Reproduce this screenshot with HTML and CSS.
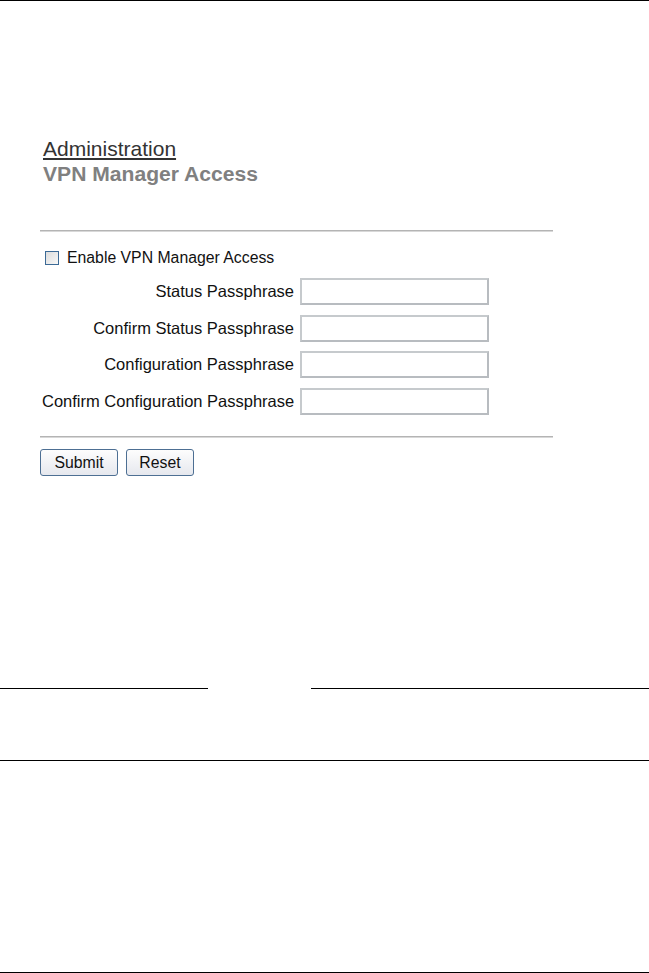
FILE: index.html
```html
<!DOCTYPE html>
<html>
<head>
<meta charset="utf-8">
<link rel="stylesheet" href="styles.css">
</head>
<body>
<div class="page">
  <div class="rule-top"></div>
  <div class="panel">
    <div class="crumb">Administration</div>
    <div class="title">VPN Manager Access</div>
    <div class="sep"></div>
    <label class="check-row"><span class="checkbox"></span><span>Enable VPN Manager Access</span></label>
    <div class="form-grid">
      <span class="lbl">Status Passphrase</span><span class="field"></span>
      <span class="lbl">Confirm Status Passphrase</span><span class="field"></span>
      <span class="lbl">Configuration Passphrase</span><span class="field"></span>
      <span class="lbl">Confirm Configuration Passphrase</span><span class="field"></span>
    </div>
    <div class="sep sep2"></div>
    <div class="buttons">
      <span class="btn btn-submit">Submit</span>
      <span class="btn btn-reset">Reset</span>
    </div>
  </div>
  <div class="footer-split">
    <div class="fl fl-left"></div>
    <div class="fl fl-right"></div>
  </div>
  <div class="rule rule-mid"></div>
  <div class="rule rule-bottom"></div>
</div>
</body>
</html>
```
FILE: styles.css
```css
html, body {
  margin: 0;
  padding: 0;
  background: #fff;
}
.page {
  width: 649px;
  height: 973px;
  font-family: "Liberation Sans", Arial, sans-serif;
  display: flex;
  flex-direction: column;
}
.rule-top {
  height: 1px;
  background: #000;
  width: 649px;
}
.panel {
  padding-left: 40px;
  padding-top: 136px;
  width: 513px;
}
.crumb {
  font-size: 21px;
  color: #333;
  text-decoration: underline;
  text-underline-offset: 2px;
  margin-left: 3px;
  line-height: 23px;
}
.title {
  font-size: 21.1px;
  font-weight: bold;
  color: #808080;
  margin-left: 3px;
  margin-top: 2px;
  line-height: 23px;
}
.sep {
  margin-top: 45px;
  height: 1px;
  border-top: 1px solid #b4b4b4;
  background: #d8d8d8;
  width: 513px;
}
.check-row {
  display: flex;
  align-items: center;
  margin-top: 17px;
  margin-left: 5px;
  font-size: 15.8px;
  color: #111;
  gap: 8px;
  height: 18px;
}
.checkbox {
  width: 12px;
  height: 12px;
  border: 1px solid #3c6a96;
  background: linear-gradient(135deg, #dcdcdc, #f8f8f8);
  display: inline-block;
}
.form-grid {
  display: grid;
  grid-template-columns: 252px 189px;
  grid-auto-rows: 27px;
  column-gap: 6px;
  row-gap: 9.7px;
  margin-top: 11px;
  margin-left: 2px;
  align-items: center;
}
.lbl {
  text-align: right;
  font-size: 16.5px;
  color: #111;
  white-space: nowrap;
}
.field {
  box-sizing: border-box;
  height: 27px;
  border: 2px solid #c6cacd;
  border-right-color: #b8bcc0;
  border-bottom-color: #b8bcc0;
  background: #fff;
}
.sep2 {
  margin-top: 21px;
}
.buttons {
  display: flex;
  gap: 8px;
  margin-top: 11px;
}
.btn {
  box-sizing: border-box;
  display: inline-flex;
  align-items: center;
  justify-content: center;
  height: 27px;
  border: 1px solid #4d6f93;
  border-radius: 3px;
  background: linear-gradient(#fdfdfd, #e6e8ee);
  font-size: 15.8px;
  color: #111;
}
.btn-submit { width: 78px; }
.btn-reset { width: 68px; }
.footer-split {
  display: flex;
  justify-content: space-between;
  margin-top: 212px;
}
.fl {
  height: 1px;
  background: #000;
}
.fl-left { width: 208px; }
.fl-right { width: 338px; }
.rule {
  height: 1px;
  background: #000;
  width: 649px;
}
.rule-mid { margin-top: 71px; }
.rule-bottom { margin-top: 211px; }
```
